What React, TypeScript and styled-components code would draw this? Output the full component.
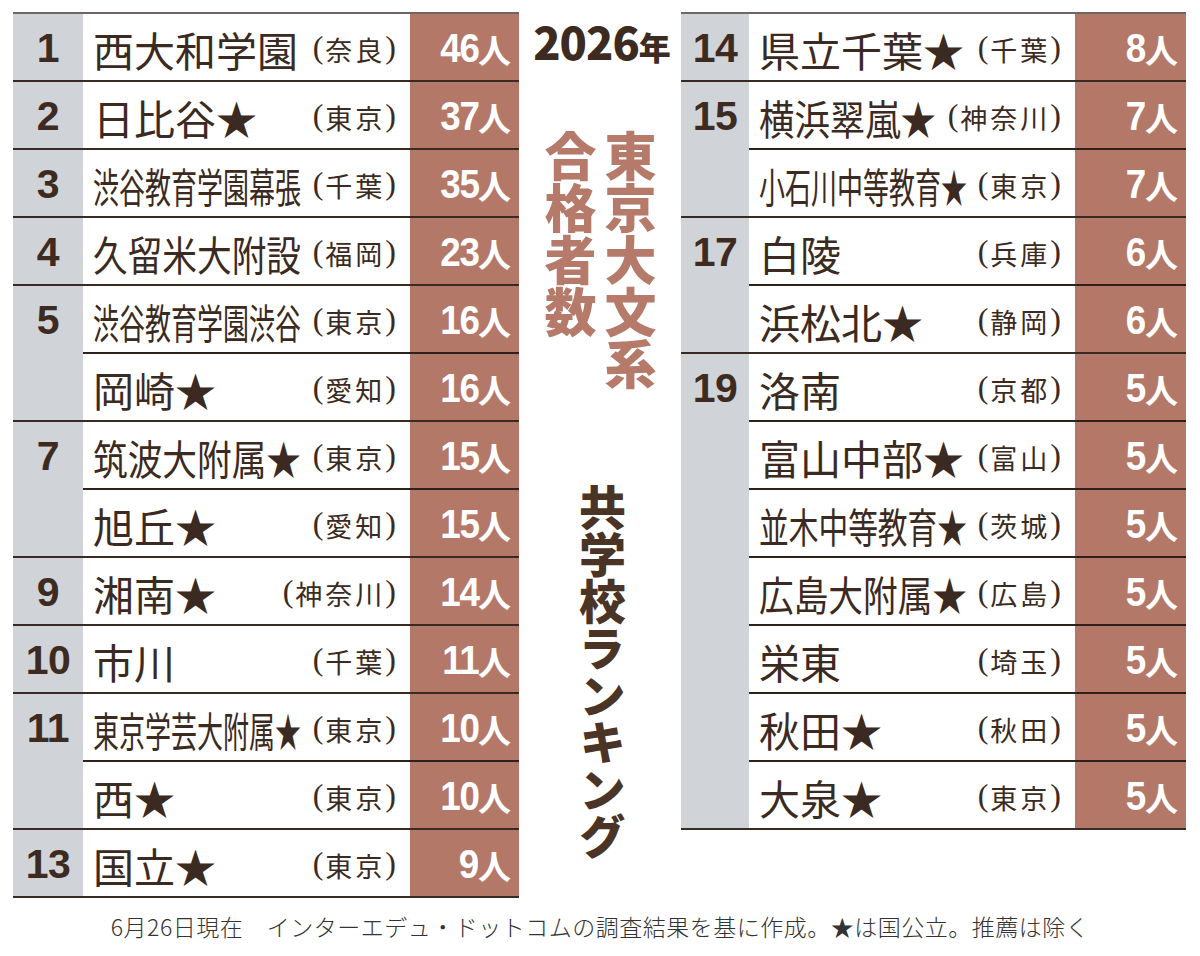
import React from "react";
import styled, { createGlobalStyle } from "styled-components";

const Global = createGlobalStyle`
  html, body { margin: 0; padding: 0; background: #ffffff; }
  body { font-family: "Noto Sans CJK JP", "Noto Sans", sans-serif; color: #3b2a21; }
`;

type Row = { name: string; pref: string; count: string };
type Group = { rank: string; rows: Row[] };

const leftGroups: Group[] = [
  { rank: "1", rows: [{ name: "西大和学園", pref: "奈良", count: "46" }] },
  { rank: "2", rows: [{ name: "日比谷★", pref: "東京", count: "37" }] },
  { rank: "3", rows: [{ name: "渋谷教育学園幕張", pref: "千葉", count: "35" }] },
  { rank: "4", rows: [{ name: "久留米大附設", pref: "福岡", count: "23" }] },
  {
    rank: "5",
    rows: [
      { name: "渋谷教育学園渋谷", pref: "東京", count: "16" },
      { name: "岡崎★", pref: "愛知", count: "16" },
    ],
  },
  {
    rank: "7",
    rows: [
      { name: "筑波大附属★", pref: "東京", count: "15" },
      { name: "旭丘★", pref: "愛知", count: "15" },
    ],
  },
  { rank: "9", rows: [{ name: "湘南★", pref: "神奈川", count: "14" }] },
  { rank: "10", rows: [{ name: "市川", pref: "千葉", count: "11" }] },
  {
    rank: "11",
    rows: [
      { name: "東京学芸大附属★", pref: "東京", count: "10" },
      { name: "西★", pref: "東京", count: "10" },
    ],
  },
  { rank: "13", rows: [{ name: "国立★", pref: "東京", count: "9" }] },
];

const rightGroups: Group[] = [
  { rank: "14", rows: [{ name: "県立千葉★", pref: "千葉", count: "8" }] },
  {
    rank: "15",
    rows: [
      { name: "横浜翠嵐★", pref: "神奈川", count: "7" },
      { name: "小石川中等教育★", pref: "東京", count: "7" },
    ],
  },
  {
    rank: "17",
    rows: [
      { name: "白陵", pref: "兵庫", count: "6" },
      { name: "浜松北★", pref: "静岡", count: "6" },
    ],
  },
  {
    rank: "19",
    rows: [
      { name: "洛南", pref: "京都", count: "5" },
      { name: "富山中部★", pref: "富山", count: "5" },
      { name: "並木中等教育★", pref: "茨城", count: "5" },
      { name: "広島大附属★", pref: "広島", count: "5" },
      { name: "栄東", pref: "埼玉", count: "5" },
      { name: "秋田★", pref: "秋田", count: "5" },
      { name: "大泉★", pref: "東京", count: "5" },
    ],
  },
];

const NAME_FONT = 41;
const NAME_AREA = 298;

function fitScale(name: string, pref: string): number {
  const prefWidth = pref.length * 31 + 28;
  const avail = NAME_AREA - prefWidth;
  const natural = Array.from(name).length * NAME_FONT;
  return Math.min(1, avail / natural);
}

const Page = styled.div`
  width: 1200px;
  padding-top: 12px;
  box-sizing: border-box;
`;

const Top = styled.div`
  display: flex;
  flex-direction: row;
  align-items: flex-start;
  padding-left: 13px;
`;

const Table = styled.div<{ $width: number; $rankWidth: number }>`
  width: ${(p) => p.$width}px;
  flex: none;
  display: flex;
  flex-direction: column;
  border-top: 2px solid #6f6663;
  --rank-w: ${(p) => p.$rankWidth}px;
`;

const GroupBox = styled.div`
  display: flex;
  flex-direction: row;
  border-bottom: 2px solid #3a2a24;
`;

const RankCell = styled.div`
  width: var(--rank-w);
  flex: none;
  background: #d0d3d8;
  display: flex;
  flex-direction: column;
`;

const RankText = styled.div`
  height: 66px;
  display: flex;
  align-items: center;
  justify-content: center;
  font-family: "Liberation Sans", "Noto Sans", sans-serif;
  font-weight: 700;
  font-size: 41px;
  letter-spacing: -0.5px;
  color: #3d2b22;
  padding-top: 2px;
  box-sizing: border-box;
`;

const Rows = styled.div`
  flex: 1 1 0;
  min-width: 0;
  display: flex;
  flex-direction: column;
`;

const RowLine = styled.div`
  display: flex;
  flex-direction: row;
  height: 66px;
  & + & {
    border-top: 2px solid #2e211c;
  }
`;

const NameCell = styled.div`
  flex: 1 1 0;
  min-width: 0;
  background: #ffffff;
  display: flex;
  align-items: center;
  padding: 0 14px 0 10px;
`;

const NameBox = styled.div`
  flex: 1 1 0;
  min-width: 0;
  white-space: nowrap;
  overflow: visible;
`;

const NameText = styled.span<{ $scale: number }>`
  display: inline-block;
  font-size: ${NAME_FONT}px;
  line-height: 1;
  font-weight: 400;
  color: #3b2a21;
  transform: scaleX(${(p) => p.$scale});
  transform-origin: left center;
  position: relative;
  top: 3px;
`;

const Pref = styled.span`
  flex: none;
  white-space: nowrap;
  font-size: 27px;
  line-height: 1;
  letter-spacing: 3px;
  color: #3b2a21;
  display: flex;
  align-items: center;
  position: relative;
  top: 2px;
`;

const Paren = styled.span<{ $side: "l" | "r" }>`
  font-family: "Liberation Serif", serif;
  font-size: 32px;
  letter-spacing: 0;
  margin-right: ${(p) => (p.$side === "l" ? "2px" : "0")};
  position: relative;
  top: -2px;
`;

const CountCell = styled.div<{ $width: number }>`
  width: ${(p) => p.$width}px;
  flex: none;
  background: #b47868;
  color: #ffffff;
  display: flex;
  align-items: center;
  justify-content: flex-end;
  padding-right: 8px;
  padding-top: 3px;
  box-sizing: border-box;
`;

const CountNum = styled.span`
  font-family: "Liberation Sans", sans-serif;
  font-weight: 700;
  font-size: 40px;
  letter-spacing: -1.5px;
  transform: scaleX(0.92);
  transform-origin: right center;
  display: inline-block;
`;

const CountUnit = styled.span`
  font-family: "Noto Sans CJK JP", sans-serif;
  font-weight: 700;
  font-size: 33px;
`;

const Middle = styled.div`
  width: 162px;
  flex: none;
  display: flex;
  flex-direction: column;
  align-items: center;
`;

const Year = styled.div`
  margin-top: 6px;
  display: flex;
  align-items: baseline;
  color: #3d2b22;
  font-weight: 900;
  line-height: 1;
  padding-left: 4px;
`;

const YearNum = styled.span`
  font-family: "Noto Sans CJK JP", sans-serif;
  font-size: 45px;
  letter-spacing: -1px;
`;

const YearUnit = styled.span`
  font-family: "Noto Sans CJK JP", sans-serif;
  font-size: 32px;
`;

const TitleV = styled.div`
  margin-top: 67px;
  writing-mode: vertical-rl;
  font-size: 52px;
  line-height: 60px;
  font-weight: 900;
  color: #b57a6a;
  letter-spacing: 0;
`;

const TitleLine = styled.div``;

const SubV = styled.div`
  margin-top: 94px;
  writing-mode: vertical-rl;
  font-size: 47px;
  line-height: 50px;
  font-weight: 900;
  color: #4a3426;
  padding-left: 4px;
`;

const Note = styled.div`
  margin-top: 14px;
  text-align: center;
  font-size: 23px;
  font-weight: 300;
  color: #333333;
  letter-spacing: 0.5px;
  line-height: 28px;
`;

function RankTable({ groups, width, rankWidth, countWidth }: { groups: Group[]; width: number; rankWidth: number; countWidth: number }) {
  return (
    <Table $width={width} $rankWidth={rankWidth}>
      {groups.map((g) => (
        <GroupBox key={g.rank}>
          <RankCell>
            <RankText>{g.rank}</RankText>
          </RankCell>
          <Rows>
            {g.rows.map((r) => (
              <RowLine key={r.name}>
                <NameCell>
                  <NameBox>
                    <NameText $scale={fitScale(r.name, r.pref)}>{r.name}</NameText>
                  </NameBox>
                  <Pref>
                    <Paren $side="l">(</Paren>
                    {r.pref}
                    <Paren $side="r">)</Paren>
                  </Pref>
                </NameCell>
                <CountCell $width={countWidth}>
                  <CountNum>{r.count}</CountNum>
                  <CountUnit>人</CountUnit>
                </CountCell>
              </RowLine>
            ))}
          </Rows>
        </GroupBox>
      ))}
    </Table>
  );
}

export default function App() {
  return (
    <Page>
      <Global />
      <Top>
        <RankTable groups={leftGroups} width={506} rankWidth={70} countWidth={109} />
        <Middle>
          <Year>
            <YearNum>2026</YearNum>
            <YearUnit>年</YearUnit>
          </Year>
          <TitleV>
            <TitleLine>東京大文系</TitleLine>
            <TitleLine>合格者数</TitleLine>
          </TitleV>
          <SubV>共学校ランキング</SubV>
        </Middle>
        <RankTable groups={rightGroups} width={505} rankWidth={68} countWidth={111} />
      </Top>
      <Note>6月26日現在　インターエデュ・ドットコムの調査結果を基に作成。★は国公立。推薦は除く</Note>
    </Page>
  );
}
